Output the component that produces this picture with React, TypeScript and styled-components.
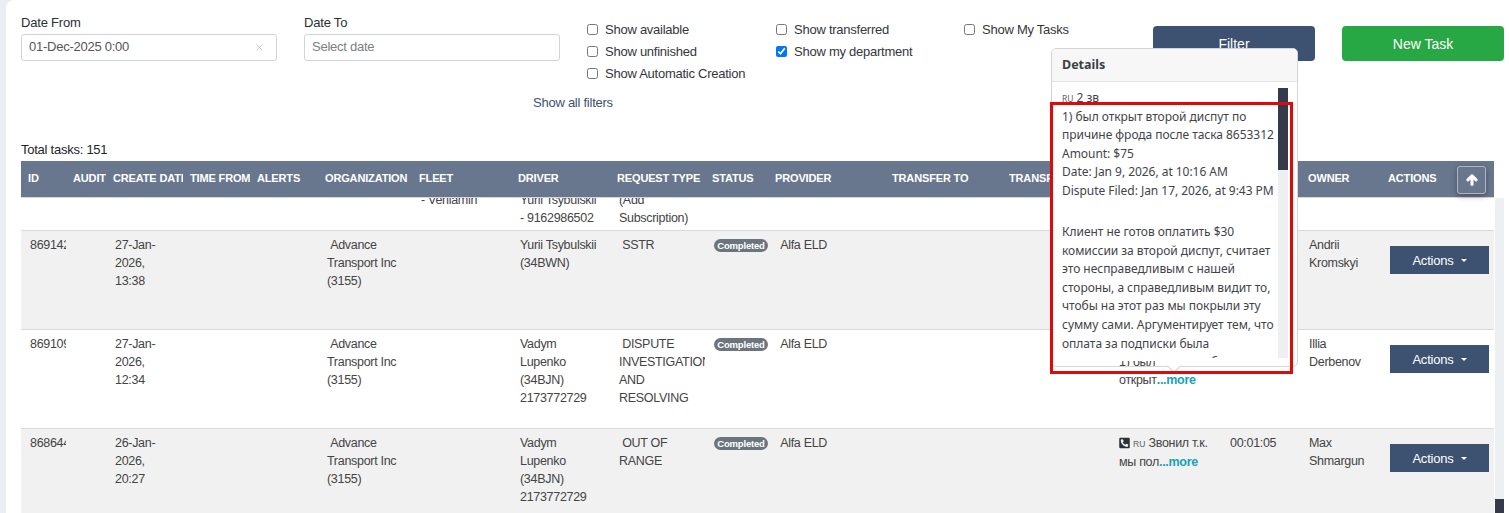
import React from 'react';
import styled, { createGlobalStyle } from 'styled-components';
import { X } from 'lucide-react';
import { FaArrowUp, FaPhoneSquareAlt } from 'react-icons/fa';

const Global = createGlobalStyle`
  html, body { margin: 0; padding: 0; background: #fff; }
  body { font-family: "Liberation Sans", Arial, sans-serif; }
  * { box-sizing: border-box; }
`;

const Page = styled.div`
  position: relative;
  display: flex;
  width: 1509px;
  height: 513px;
  overflow: hidden;
  background: #ebedf3;
`;
const Main = styled.main`
  flex: 1;
  display: flex;
  flex-direction: column;
  min-width: 0;
  padding: 0 5px 0 15px;
  margin-left: 6px;
  background: #fff;
  border-top-left-radius: 8px;
`;
const FilterBar = styled.div`
  display: flex;
  height: 90px;
`;
const Field = styled.label`
  display: block;
  width: 256px;
  margin-right: 27px;
  padding-top: 15px;
`;
const FieldLabel = styled.div`
  font-size: 13px;
  letter-spacing: -0.2px;
  line-height: 16px;
  color: #2b2f33;
`;
const DateInput = styled.div`
  display: flex;
  align-items: center;
  justify-content: space-between;
  height: 27px;
  margin-top: 3px;
  padding: 0 11px 2px 7px;
  border: 1px solid #ced4da;
  border-radius: 3px;
  font-size: 13px;
  letter-spacing: -0.25px;
  color: #555;
`;
const Placeholder = styled.span`
  color: #7d8084;
`;
const Clear = styled(X)`
  width: 11px;
  height: 11px;
  margin-top: 2px;
  color: #b5b8bb;
`;
const Checks = styled.div`
  display: grid;
  grid-template-columns: 189px 188px 170px;
  grid-auto-rows: 22px;
  padding-top: 18px;
`;
const CheckLabel = styled.label`
  display: flex;
  align-items: center;
  gap: 7px;
  height: 22px;
  font-size: 13px;
  letter-spacing: -0.25px;
  color: #33373b;
  white-space: nowrap;
`;
const CheckBox = styled.input.attrs({ type: 'checkbox' })`
  width: 11px;
  height: 11px;
  margin: 0;
  flex: none;
`;
const Buttons = styled.div`
  display: flex;
  gap: 27px;
  margin-left: auto;
  padding-top: 26px;
`;
const BigButton = styled.button<{ $tone: string }>`
  width: 162px;
  height: 35px;
  border: none;
  border-radius: 4px;
  background: ${p => p.$tone};
  color: #fff;
  font: 14px "Liberation Sans", Arial, sans-serif;
`;
const ShowAll = styled.a`
  display: block;
  margin: 4px 0 0 512px;
  font-size: 13px;
  letter-spacing: -0.25px;
  line-height: 18px;
  color: #3d5170;
`;
const Total = styled.div`
  margin-top: 29px;
  font-size: 13px;
  letter-spacing: -0.25px;
  line-height: 18px;
  color: #212529;
`;
const TableGrid = `
  display: grid;
  grid-template-columns: 45px 40px 77px 67px 68px 94px 99px 99px 95px 63px 117px 117px 108px 111px 80px 80px 113px;
`;
const Head = styled.div`
  ${TableGrid}
  position: relative;
  width: 1473px;
  height: 37px;
  margin-top: 2px;
  background: #69778e;
  border-bottom: 1px solid #d4d8de;
`;
const HeadCell = styled.div`
  padding: 10px 0 0 7px;
  overflow: hidden;
  white-space: nowrap;
  font-size: 11px;
  letter-spacing: -0.15px;
  font-weight: 700;
  line-height: 14px;
  color: #fff;
`;
const UpButton = styled.button`
  position: absolute;
  top: 5px;
  right: 8px;
  display: flex;
  align-items: center;
  justify-content: center;
  width: 29px;
  height: 28px;
  padding: 0;
  border: 1px solid #aeb6c3;
  border-radius: 3px;
  background: #69778e;
  color: #fff;
  font-size: 12px;
  box-shadow: 0 2px 6px rgba(0, 0, 0, 0.35);
`;
const UpIcon = styled(FaArrowUp)`
  stroke: currentColor;
  stroke-width: 50px;
`;
const Body = styled.div`
  flex: 1;
  display: flex;
  min-height: 0;
`;
const Rows = styled.div`
  width: 1473px;
  overflow: hidden;
`;
const PartialRow = styled.div`
  ${TableGrid}
  height: 33px;
  align-items: end;
  overflow: hidden;
  border-bottom: 1px solid #d8dadd;
`;
const Row = styled.div<{ $shade: boolean }>`
  ${TableGrid}
  height: 99px;
  border-bottom: 1px solid #d8dadd;
  background: ${p => (p.$shade ? '#f1f1f1' : '#fff')};
`;
const Cell = styled.div`
  min-width: 0;
  padding: 5px 0 0 9px;
  overflow: hidden;
  font-size: 12.5px;
  letter-spacing: -0.3px;
  line-height: 18px;
  color: #444;
`;
const OwnerCell = styled(Cell)`
  padding-left: 8px;
`;
const BottomCell = styled(Cell)`
  padding: 0 0 3px 9px;
`;
const Line = styled.div`
  white-space: nowrap;
`;
const Badge = styled.span`
  display: inline-block;
  width: 54px;
  height: 13px;
  margin-top: 3px;
  border-radius: 7px;
  background: #6c757d;
  color: #fff;
  font-size: 9.5px;
  letter-spacing: -0.2px;
  font-weight: 700;
  line-height: 13px;
  text-align: center;
  vertical-align: top;
`;
const More = styled.a`
  color: #17a2b8;
  font-weight: 700;
`;
const Lang = styled.span`
  font-size: 8.5px;
  letter-spacing: 0;
  color: #5b5f63;
`;
const Phone = styled(FaPhoneSquareAlt)`
  width: 11px;
  height: 12px;
  margin-right: 3px;
  color: #2b2f36;
  vertical-align: -2px;
`;
const ActionCell = styled.div`
  padding: 15px 0 0 9px;
`;
const ActionButton = styled.button`
  display: flex;
  align-items: center;
  justify-content: center;
  gap: 7px;
  width: 99px;
  height: 28px;
  padding: 0;
  border: none;
  background: #3d5170;
  color: #fff;
  font: 13px "Liberation Sans", Arial, sans-serif;
  letter-spacing: -0.2px;
`;
const Caret = styled.span`
  width: 0;
  height: 0;
  border-left: 3.5px solid transparent;
  border-right: 3.5px solid transparent;
  border-top: 3.5px solid #fff;
`;
const Scroll = styled.div`
  display: flex;
  flex-direction: column;
  flex: none;
  background: #ecf0f3;
`;
const PageScroll = styled(Scroll)`
  width: 9px;
  margin-left: 1px;
  justify-content: flex-end;
`;
const PageThumb = styled.div`
  height: 14px;
  background: #343a4a;
`;
const Popover = styled.aside`
  position: absolute;
  top: 48px;
  left: 1051px;
  display: flex;
  flex-direction: column;
  width: 247px;
  height: 319px;
  border: 1px solid #d2d4d6;
  border-radius: 5px;
  background: #fff;
  font-family: "Noto Sans", "Open Sans", sans-serif;
  &::after {
    content: '';
    position: absolute;
    left: 117px;
    bottom: -5px;
    width: 9px;
    height: 9px;
    background: #fff;
    border-right: 1px solid #d2d4d6;
    border-bottom: 1px solid #d2d4d6;
    transform: rotate(45deg);
  }
`;
const PopHead = styled.div`
  height: 33px;
  padding: 0 10px;
  background: #f7f7f7;
  border-bottom: 1px solid #e4e4e4;
  border-radius: 4px 4px 0 0;
  font-size: 12.5px;
  font-weight: 700;
  line-height: 31px;
  color: #3a3f45;
`;
const PopBody = styled.div`
  display: flex;
  height: 270px;
  margin-top: 6px;
  padding: 0 9px 0 10px;
`;
const PopText = styled.div`
  flex: 1;
  min-width: 0;
  padding-top: 1px;
  overflow: hidden;
  font-size: 12px;
  line-height: 18.5px;
  letter-spacing: -0.04px;
  color: #3f4449;
`;
const PopLine = styled.div`
  height: 18.6px;
  white-space: nowrap;
`;
const PopGap = styled.div`
  height: 22.5px;
`;
const PopScroll = styled(Scroll)`
  width: 10px;
`;
const PopThumb = styled.div`
  height: 82px;
  background: #343a4a;
`;
const PeekText = styled.div`
  position: absolute;
  left: 67px;
  bottom: 0;
  height: 5px;
  overflow: hidden;
  font: 12.5px/18px "Liberation Sans", Arial, sans-serif;
  letter-spacing: -0.3px;
  color: #444;
`;
const PeekLine = styled.div`
  margin-top: -8px;
  white-space: nowrap;
`;
const Annotation = styled.div`
  position: absolute;
  top: 102px;
  left: 1050px;
  width: 243px;
  height: 272px;
  border: 3px solid #dd0a0a;
  pointer-events: none;
`;

const headers = ['ID', 'AUDIT', 'CREATE DATE', 'TIME FROM', 'ALERTS', 'ORGANIZATION', 'FLEET', 'DRIVER', 'REQUEST TYPE', 'STATUS', 'PROVIDER', 'TRANSFER TO', 'TRANSFER DATE', 'DETAILS', 'DURATION', 'OWNER', 'ACTIONS'];
const ORG = ['\u00a0Advance', 'Transport Inc', '(3155)'];

type TaskRow = {
  id: string;
  date: string[];
  driver: string[];
  request: string[];
  details: React.ReactNode;
  duration?: string;
  owner: string[];
};

const rows: TaskRow[] = [
  {
    id: '8691421',
    date: ['27-Jan-', '2026,', '13:38'],
    driver: ['Yurii Tsybulskii', '(34BWN)'],
    request: ['\u00a0SSTR'],
    details: null,
    owner: ['Andrii', 'Kromskyi'],
  },
  {
    id: '8691093',
    date: ['27-Jan-', '2026,', '12:34'],
    driver: ['Vadym', 'Lupenko', '(34BJN)', '2173772729'],
    request: ['\u00a0DISPUTE', 'INVESTIGATION', 'AND', 'RESOLVING'],
    details: (
      <>
        <Line>&nbsp;</Line>
        <Line>&nbsp;</Line>
        <Line>открыт<More>...more</More></Line>
      </>
    ),
    owner: ['Illia', 'Derbenov'],
  },
  {
    id: '8686445',
    date: ['26-Jan-', '2026,', '20:27'],
    driver: ['Vadym', 'Lupenko', '(34BJN)', '2173772729'],
    request: ['\u00a0OUT OF', 'RANGE'],
    details: (
      <>
        <Line><Phone /><Lang>RU</Lang> Звонил т.к.</Line>
        <Line>мы пол<More>...more</More></Line>
      </>
    ),
    duration: '00:01:05',
    owner: ['Max', 'Shmargun'],
  },
];

const popLead = [
  '1) был открыт второй диспут по',
  'причине фрода после таска 8653312',
  'Amount: $75',
  'Date: Jan 9, 2026, at 10:16 AM',
  'Dispute Filed: Jan 17, 2026, at 9:43 PM',
];
const popRest = [
  'Клиент не готов оплатить $30',
  'комиссии за второй диспут, считает',
  'это несправедливым с нашей',
  'стороны, а справедливым видит то,',
  'чтобы на этот раз мы покрыли эту',
  'сумму сами. Аргументирует тем, что',
  'оплата за подписки была',
  'произведена клиентом и без',
];

const Lines = ({ items }: { items: string[] }) => (
  <>
    {items.map((t, i) => (
      <Line key={i}>{t}</Line>
    ))}
  </>
);

const Check = ({ label, checked }: { label: string; checked?: boolean }) => (
  <CheckLabel>
    <CheckBox defaultChecked={checked} />
    {label}
  </CheckLabel>
);

export default function App() {
  return (
    <Page>
      <Global />
      <Main>
        <FilterBar>
          <Field>
            <FieldLabel>Date From</FieldLabel>
            <DateInput>
              01-Dec-2025 0:00
              <Clear strokeWidth={1.5} />
            </DateInput>
          </Field>
          <Field>
            <FieldLabel>Date To</FieldLabel>
            <DateInput>
              <Placeholder>Select date</Placeholder>
            </DateInput>
          </Field>
          <Checks>
            <Check label="Show available" />
            <Check label="Show transferred" />
            <Check label="Show My Tasks" />
            <Check label="Show unfinished" />
            <Check label="Show my department" checked />
            <span />
            <Check label="Show Automatic Creation" />
          </Checks>
          <Buttons>
            <BigButton $tone="#3d5170">Filter</BigButton>
            <BigButton $tone="#28a745">New Task</BigButton>
          </Buttons>
        </FilterBar>
        <ShowAll>Show all filters</ShowAll>
        <Total>Total tasks: 151</Total>
        <Head>
          {headers.map(h => (
            <HeadCell key={h}>{h}</HeadCell>
          ))}
          <UpButton>
            <UpIcon />
          </UpButton>
        </Head>
        <Body>
          <Rows>
            <PartialRow>
              <span />
              <span />
              <span />
              <span />
              <span />
              <span />
              <BottomCell>
                <Lines items={['- Veniamin', '\u00a0']} />
              </BottomCell>
              <BottomCell>
                <Lines items={['Yurii Tsybulskii', '- 9162986502']} />
              </BottomCell>
              <BottomCell>
                <Lines items={['(Add', 'Subscription)']} />
              </BottomCell>
            </PartialRow>
            {rows.map((r, i) => (
              <Row key={r.id} $shade={i !== 1}>
                <Cell><Line>{r.id}</Line></Cell>
                <Cell />
                <Cell><Lines items={r.date} /></Cell>
                <Cell />
                <Cell />
                <Cell><Lines items={ORG} /></Cell>
                <Cell />
                <Cell><Lines items={r.driver} /></Cell>
                <Cell><Lines items={r.request} /></Cell>
                <Cell><Badge>Completed</Badge></Cell>
                <Cell><Line>{'\u00a0Alfa ELD'}</Line></Cell>
                <Cell />
                <Cell />
                <Cell>{r.details}</Cell>
                <Cell>{r.duration && <Line>{r.duration}</Line>}</Cell>
                <OwnerCell><Lines items={r.owner} /></OwnerCell>
                <ActionCell>
                  <ActionButton>
                    Actions <Caret />
                  </ActionButton>
                </ActionCell>
              </Row>
            ))}
          </Rows>
          <PageScroll>
            <PageThumb />
          </PageScroll>
        </Body>
      </Main>
      <Popover>
        <PopHead>Details</PopHead>
        <PopBody>
          <PopText>
            <PopLine><Lang>RU</Lang> 2 зв</PopLine>
            {popLead.map(t => (
              <PopLine key={t}>{t}</PopLine>
            ))}
            <PopGap />
            {popRest.map(t => (
              <PopLine key={t}>{t}</PopLine>
            ))}
          </PopText>
          <PopScroll>
            <PopThumb />
          </PopScroll>
        </PopBody>
        <PeekText>
          <PeekLine>1) был</PeekLine>
        </PeekText>
      </Popover>
      <Annotation />
    </Page>
  );
}
